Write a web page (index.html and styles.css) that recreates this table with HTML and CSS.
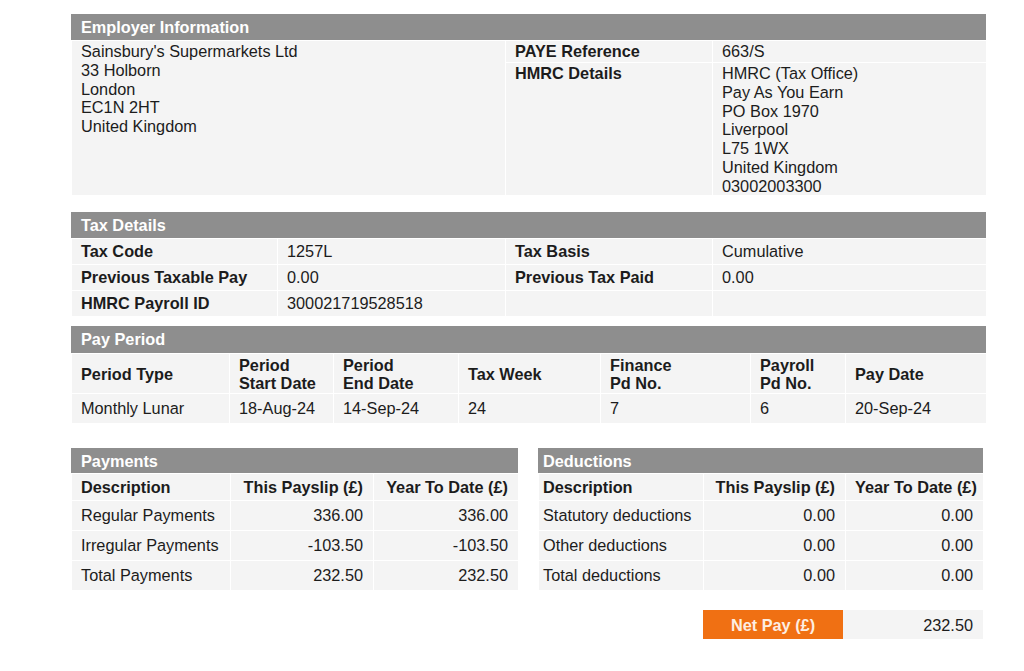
FILE: index.html
```html
<!DOCTYPE html>
<html lang="en">
<head>
<meta charset="utf-8">
<title>Payslip</title>
<link rel="stylesheet" href="styles.css">
</head>
<body>
<main class="slip">
  <section class="sec sec-employer">
    <div class="sec-head">Employer Information</div>
    <table class="grid">
      <colgroup><col class="c206"><col class="c228"><col class="c207"><col class="c274"></colgroup>
      <tr class="r-paye">
        <td class="top" rowspan="2" colspan="2">Sainsbury's Supermarkets Ltd<br>33 Holborn<br>London<br>EC1N 2HT<br>United Kingdom</td>
        <th class="top">PAYE Reference</th>
        <td class="top">663/S</td>
      </tr>
      <tr class="r-hmrc">
        <th class="top">HMRC Details</th>
        <td class="top">HMRC (Tax Office)<br>Pay As You Earn<br>PO Box 1970<br>Liverpool<br>L75 1WX<br>United Kingdom<br>03002003300</td>
      </tr>
    </table>
  </section>

  <section class="sec sec-tax">
    <div class="sec-head">Tax Details</div>
    <table class="grid rows26">
      <colgroup><col class="c206"><col class="c228"><col class="c207"><col class="c274"></colgroup>
      <tr><th>Tax Code</th><td>1257L</td><th>Tax Basis</th><td>Cumulative</td></tr>
      <tr><th>Previous Taxable Pay</th><td>0.00</td><th>Previous Tax Paid</th><td>0.00</td></tr>
      <tr><th>HMRC Payroll ID</th><td>300021719528518</td><td></td><td></td></tr>
    </table>
  </section>

  <section class="sec sec-period">
    <div class="sec-head head-tall">Pay Period</div>
    <table class="grid">
      <colgroup><col class="p1"><col class="p2"><col class="p3"><col class="p4"><col class="p5"><col class="p6"><col class="p7"></colgroup>
      <tr class="r-phead">
        <th>Period Type</th><th>Period<br>Start Date</th><th>Period<br>End Date</th><th>Tax Week</th><th>Finance<br>Pd No.</th><th>Payroll<br>Pd No.</th><th>Pay Date</th>
      </tr>
      <tr class="r-pdata">
        <td>Monthly Lunar</td><td>18-Aug-24</td><td>14-Sep-24</td><td>24</td><td>7</td><td>6</td><td>20-Sep-24</td>
      </tr>
    </table>
  </section>

  <div class="money">
    <section class="sec sec-pay">
      <div class="sec-head head-short">Payments</div>
      <table class="grid amounts">
        <colgroup><col class="a1"><col class="a2"><col class="a3"></colgroup>
        <tr class="r-ahead"><th>Description</th><th class="num">This Payslip (£)</th><th class="num">Year To Date (£)</th></tr>
        <tr><td>Regular Payments</td><td class="num">336.00</td><td class="num">336.00</td></tr>
        <tr><td>Irregular Payments</td><td class="num">-103.50</td><td class="num">-103.50</td></tr>
        <tr><td>Total Payments</td><td class="num">232.50</td><td class="num">232.50</td></tr>
      </table>
    </section>
    <section class="sec sec-ded">
      <div class="sec-head head-short">Deductions</div>
      <table class="grid amounts">
        <colgroup><col class="d1"><col class="d2"><col class="d3"></colgroup>
        <tr class="r-ahead"><th>Description</th><th class="num">This Payslip (£)</th><th class="num">Year To Date (£)</th></tr>
        <tr><td>Statutory deductions</td><td class="num">0.00</td><td class="num">0.00</td></tr>
        <tr><td>Other deductions</td><td class="num">0.00</td><td class="num">0.00</td></tr>
        <tr><td>Total deductions</td><td class="num">0.00</td><td class="num">0.00</td></tr>
      </table>
    </section>
  </div>

  <div class="net">
    <div class="net-label">Net Pay (£)</div>
    <div class="net-value">232.50</div>
  </div>
</main>
</body>
</html>
```

FILE: styles.css
```css
* { box-sizing: border-box; }
html, body { margin: 0; padding: 0; background: #fff; }
body {
  font-family: "Liberation Sans", Arial, Helvetica, sans-serif;
  font-size: 16.3px;
  color: #1c1c1c;
}
.slip {
  width: 915px;
  margin-left: 71px;
  padding-top: 14px;
}
.sec-head {
  background: #8e8e8e;
  color: #fff;
  font-weight: bold;
  font-size: 16.3px;
  height: 26px;
  line-height: 27px;
  padding-left: 10px;
}
.head-tall { height: 27px; line-height: 26px; }
.head-short { height: 25px; line-height: 26px; }

.grid {
  width: 100%;
  table-layout: fixed;
  border-collapse: collapse;
  background: #f4f4f4;
}
.grid th, .grid td {
  border: 1px solid #fff;
  padding: 0 10px 0 9px;
  text-align: left;
  vertical-align: middle;
  line-height: 18.75px;
  font-size: 16.3px;
  white-space: nowrap;
  overflow: hidden;
}
.grid th { font-weight: bold; }
.grid .top { vertical-align: top; padding-top: 1px; }
.grid .num { text-align: right; }

.c206 { width: 206px; }
.c228 { width: 228px; }
.c207 { width: 207px; }
.c274 { width: 274px; }

.r-paye td, .r-paye th { height: 22px; }
.r-hmrc td, .r-hmrc th { height: 133px; }

.sec-tax { margin-top: 16px; }
.rows26 td, .rows26 th { height: 26px; }

.sec-period { margin-top: 9px; }
.p1 { width: 158px; }
.p2 { width: 104px; }
.p3 { width: 125px; }
.p4 { width: 142px; }
.p5 { width: 150px; }
.p6 { width: 95px; }
.p7 { width: 141px; }
.r-phead th { height: 40px; line-height: 18px; padding-top: 1px; }
.r-pdata td { height: 30px; }

.money {
  display: flex;
  gap: 20px;
  margin-top: 24px;
}
.sec-pay { width: 447px; }
.sec-ded { width: 445px; }
.sec-ded .sec-head { padding-left: 5px; }
.sec-ded .grid td:first-child,
.sec-ded .grid th:first-child { padding-left: 4px; }
.a1 { width: 159px; }
.a2 { width: 143px; }
.a3 { width: 145px; }
.d1 { width: 165px; }
.d2 { width: 142px; }
.d3 { width: 138px; }
.amounts td { height: 30px; }
.amounts .r-ahead th { height: 27px; }

.net {
  display: flex;
  margin-top: 19px;
  padding-left: 632px;
}
.net-label {
  width: 140px;
  height: 29px;
  background: #f07013;
  color: #fdeee2;
  font-weight: bold;
  text-align: center;
  line-height: 30px;
}
.net-value {
  width: 140px;
  height: 29px;
  background: #f4f4f4;
  text-align: right;
  padding-right: 10px;
  line-height: 30px;
}
```
